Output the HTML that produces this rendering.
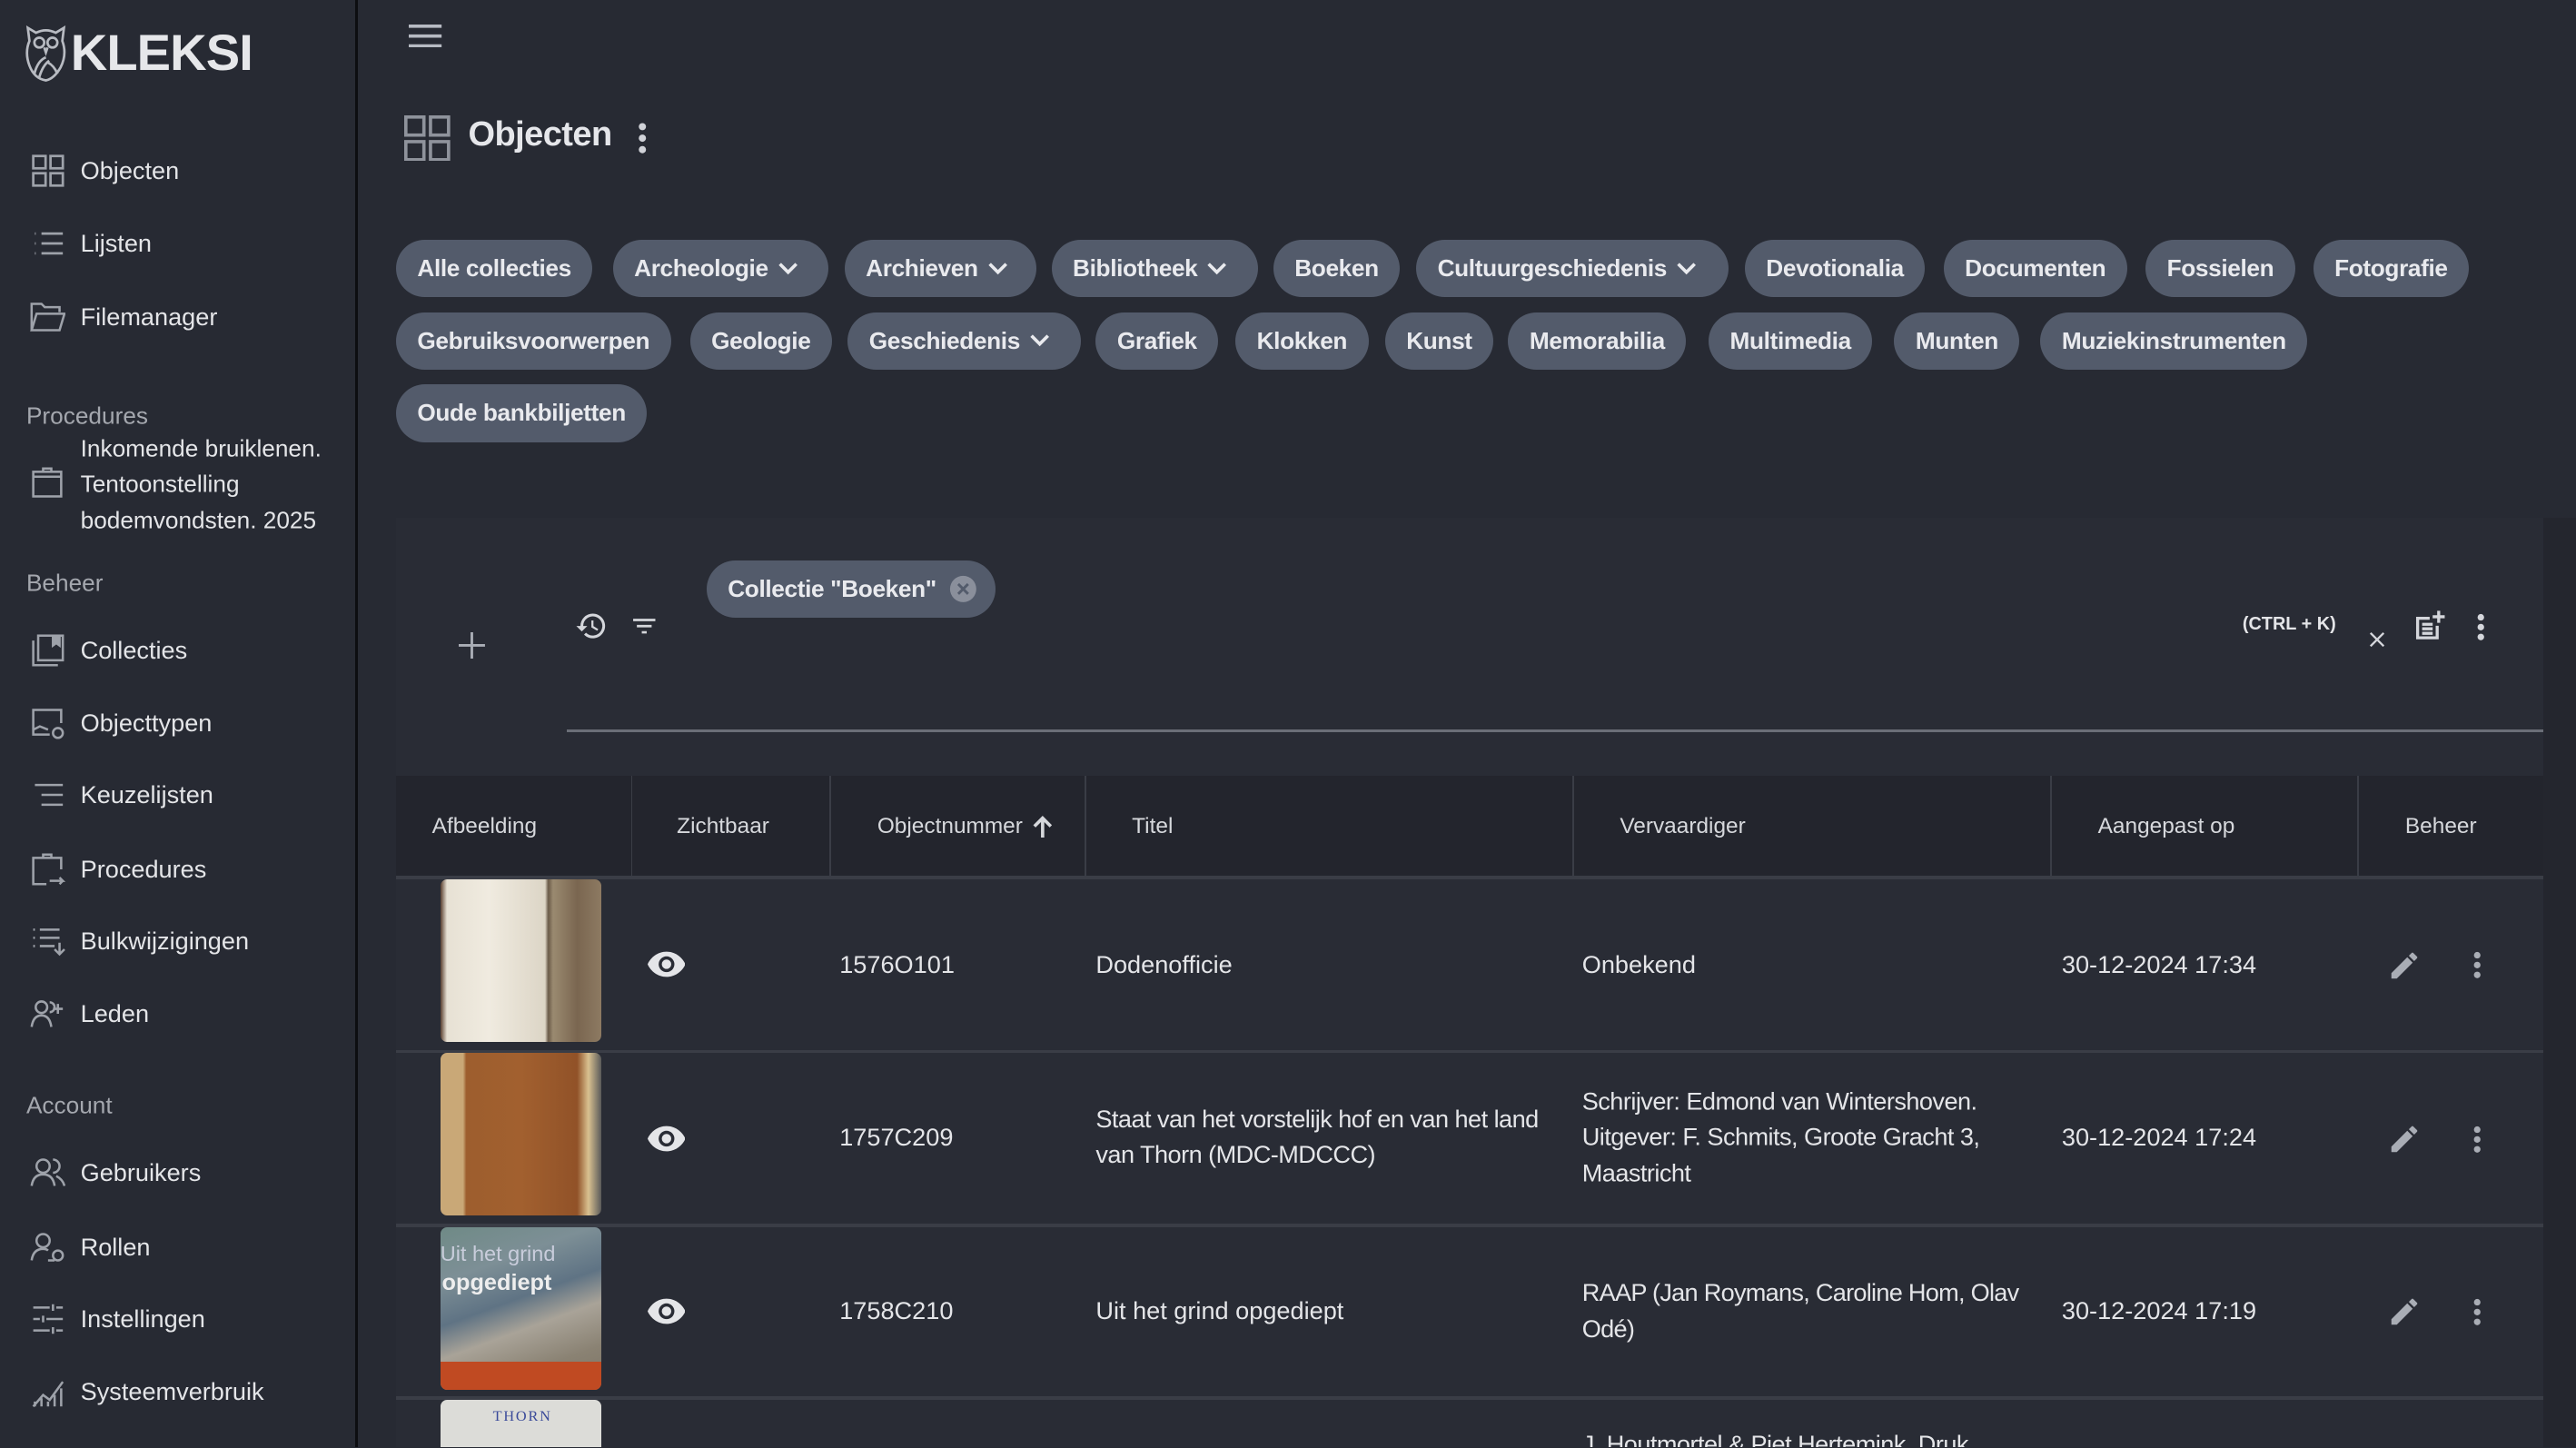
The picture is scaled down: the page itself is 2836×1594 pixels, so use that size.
<!DOCTYPE html>
<html><head><meta charset="utf-8"><style>
*{box-sizing:border-box;margin:0;padding:0}
html,body{width:2836px;height:1594px;overflow:hidden;background:#272a33}
#r{zoom:1.80867;width:1568px;height:881px;position:relative;overflow:hidden;font-family:"Liberation Sans",sans-serif;color:#e2e3e7;background:#272a33}
.a{position:absolute}
#sb{left:0;top:0;width:218px;height:881px;background:#272a33;border-right:2px solid #0d0e11}
.ni{position:absolute;left:49px;font-size:15px;color:#e4e5e8;transform:translateY(-50%);white-space:nowrap}
.ic{position:absolute;left:18px;width:22px;height:22px;transform:translateY(-50%)}
.sec{position:absolute;left:16px;font-size:14.5px;color:#a4a7ae;transform:translateY(-50%)}
.chip{position:absolute;height:35px;border-radius:18px;background:#535b6b;color:#e9eaee;font-weight:bold;font-size:14.5px;line-height:35px;padding:0 13px;white-space:nowrap;letter-spacing:-.2px;display:flex;align-items:center}
.chip svg{display:inline-block;margin-left:5px}
.th{position:absolute;top:472px;height:62px;line-height:62px;font-size:13.5px;color:#d6d8dc}
.vl{position:absolute;top:472px;height:62px;width:1px;background:#3a3d46}
.hl{position:absolute;left:241px;width:1307px;height:2px;background:#3a3d46}
.td{position:absolute;font-size:15px;color:#e4e5e8;line-height:22px;transform:translateY(-50%)}
.th2{position:absolute;left:268px;width:98px;height:99px;border-radius:4px;overflow:hidden}
svg{display:block}
</style></head><body><div id="r">
<div id="sb" class="a">
 <div class="a" style="left:15px;top:15px">
  <svg width="26" height="35" viewBox="0 0 26 35" fill="none" stroke="#b8bbc2" stroke-width="1.5"><path d="M2 2 L7 5 Q13 2 19 5 L24 2 L23 10 Q26 18 22 26 Q18 33 13 34 Q6 33 3 25 Q0 17 3 10 Z"/><circle cx="9" cy="11" r="3"/><circle cx="17" cy="11" r="3"/><path d="M12 14 L13 17 L14 14"/><path d="M6 30 Q8 22 13 20 M9 32 Q11 25 15 22 M20 30 Q18 25 14 23"/></svg>
 </div>
 <div class="a" style="left:43px;top:14px;font-size:31px;font-weight:bold;color:#e6e7ea;letter-spacing:-0.5px">KLEKSI</div>

 <svg class="ic" style="top:104px" viewBox="0 0 22 22" fill="none" stroke="#9ea2aa" stroke-width="1.5"><rect x="2" y="2" width="7.5" height="7.5"/><rect x="12.5" y="2" width="7.5" height="7.5"/><rect x="2" y="12.5" width="7.5" height="7.5"/><rect x="12.5" y="12.5" width="7.5" height="7.5"/></svg>
 <div class="ni" style="top:104px">Objecten</div>
 <svg class="ic" style="top:148px" viewBox="0 0 22 22" fill="none" stroke="#9ea2aa" stroke-width="1.5"><path d="M3 5h0.5M3 11h0.5M3 17h0.5M7 5h13M7 11h13M7 17h13"/></svg>
 <div class="ni" style="top:148px">Lijsten</div>
 <svg class="ic" style="top:193px" viewBox="0 0 22 22" fill="none" stroke="#9ea2aa" stroke-width="1.4"><path d="M1 19V3h6l2 2h9v3M1 19l3-10h17l-3 10z"/></svg>
 <div class="ni" style="top:193px">Filemanager</div>

 <div class="sec" style="top:253px">Procedures</div>
 <svg class="ic" style="top:294px" viewBox="0 0 22 22" fill="none" stroke="#9ea2aa" stroke-width="1.4"><rect x="2" y="4" width="17" height="15"/><path d="M2 7h17M8 4V2h5v2"/></svg>
 <div class="ni" style="top:295px;line-height:22px;font-size:14.5px">Inkomende bruiklenen.<br>Tentoonstelling<br>bodemvondsten. 2025</div>

 <div class="sec" style="top:355px">Beheer</div>
 <svg class="ic" style="top:396px" viewBox="0 0 22 22" fill="none" stroke="#9ea2aa" stroke-width="1.4"><rect x="5" y="2" width="15" height="15"/><path d="M2 5v15h15"/><path d="M14 2v6l2-1.5 2 1.5V2" fill="#9ea2aa"/></svg>
 <div class="ni" style="top:396px">Collecties</div>
 <svg class="ic" style="top:440px" viewBox="0 0 22 22" fill="none" stroke="#9ea2aa" stroke-width="1.4"><path d="M12 18H2V3h17v8M2 15l4-2 5 2"/><circle cx="17" cy="17" r="3"/></svg>
 <div class="ni" style="top:440px">Objecttypen</div>
 <svg class="ic" style="top:484px" viewBox="0 0 22 22" fill="none" stroke="#9ea2aa" stroke-width="1.4"><path d="M3 5h17M7 11h13M7 17h13"/></svg>
 <div class="ni" style="top:484px">Keuzelijsten</div>
 <svg class="ic" style="top:529px" viewBox="0 0 22 22" fill="none" stroke="#9ea2aa" stroke-width="1.4"><path d="M19 11V4H2v16h8M8 4V2h5v2M12 18h8l-2-2M20 18l-2 2"/></svg>
 <div class="ni" style="top:529px">Procedures</div>
 <svg class="ic" style="top:573px" viewBox="0 0 22 22" fill="none" stroke="#9ea2aa" stroke-width="1.4"><path d="M2 4h1M6 4h12M2 9h1M6 9h12M2 14h1M6 14h9M15 16l3 3 3-3M18 12v7"/></svg>
 <div class="ni" style="top:573px">Bulkwijzigingen</div>
 <svg class="ic" style="top:617px" viewBox="0 0 22 22" fill="none" stroke="#9ea2aa" stroke-width="1.4"><circle cx="7" cy="7" r="3.5"/><path d="M1 19q1-7 6-7t6 7M12 4a3 3 0 0 1 0 6M17 5v6M14 8h6"/></svg>
 <div class="ni" style="top:617px">Leden</div>

 <div class="sec" style="top:673px">Account</div>
 <svg class="ic" style="top:714px" viewBox="0 0 22 22" fill="none" stroke="#9ea2aa" stroke-width="1.4"><circle cx="8" cy="7" r="4"/><path d="M1 19q1-7 7-7t7 7M14 3a4 4 0 0 1 0 8M16 13q4 2 5 6"/></svg>
 <div class="ni" style="top:714px">Gebruikers</div>
 <svg class="ic" style="top:759px" viewBox="0 0 22 22" fill="none" stroke="#9ea2aa" stroke-width="1.4"><circle cx="8" cy="7" r="4"/><path d="M1 19q1-7 7-7 2 0 3 1M11 19h4"/><circle cx="17" cy="16" r="3"/></svg>
 <div class="ni" style="top:759px">Rollen</div>
 <svg class="ic" style="top:803px" viewBox="0 0 22 22" fill="none" stroke="#9ea2aa" stroke-width="1.4"><path d="M2 4h10M16 4h4M14 2v4M2 11h4M10 11h10M8 9v4M2 18h10M16 18h4M14 16v4"/></svg>
 <div class="ni" style="top:803px">Instellingen</div>
 <svg class="ic" style="top:847px" viewBox="0 0 22 22" fill="none" stroke="#9ea2aa" stroke-width="1.4"><path d="M2 20l6-7 4 3 8-11M3 20v-3M7 20v-5M11 20v-3M15 20v-7M19 20v-11"/></svg>
 <div class="ni" style="top:847px">Systeemverbruik</div>
</div>

<!-- top -->
<svg class="a" style="left:249px;top:15px" width="20" height="14" viewBox="0 0 20 14" stroke="#b7bbc3" stroke-width="2"><path d="M0 1h20M0 7h20M0 13h20"/></svg>
<svg class="a" style="left:246px;top:70px" width="28" height="28" viewBox="0 0 28 28" fill="none" stroke="#8f939c" stroke-width="2"><rect x="1" y="1" width="11" height="11"/><rect x="16" y="1" width="11" height="11"/><rect x="1" y="16" width="11" height="11"/><rect x="16" y="16" width="11" height="11"/></svg>
<div class="a" style="left:285px;top:70px;font-size:21px;font-weight:bold;color:#e5e6ea;letter-spacing:-0.3px">Objecten</div>
<svg class="a" style="left:387px;top:74px" width="8" height="20" viewBox="0 0 8 20" fill="#d0d2d8"><circle cx="4" cy="3" r="2.2"/><circle cx="4" cy="10" r="2.2"/><circle cx="4" cy="17" r="2.2"/></svg>

<!-- chips -->
<div class="chip" style="left:241px;top:146px">Alle collecties</div>
<div class="chip" style="left:373px;top:146px;width:131px">Archeologie<svg width="14" height="10" viewBox="0 0 14 10" fill="none" stroke="#e9eaee" stroke-width="2"><path d="M2 2l5 5 5-5"/></svg></div>
<div class="chip" style="left:514px;top:146px;width:117px">Archieven<svg width="14" height="10" viewBox="0 0 14 10" fill="none" stroke="#e9eaee" stroke-width="2"><path d="M2 2l5 5 5-5"/></svg></div>
<div class="chip" style="left:640px;top:146px;width:126px">Bibliotheek<svg width="14" height="10" viewBox="0 0 14 10" fill="none" stroke="#e9eaee" stroke-width="2"><path d="M2 2l5 5 5-5"/></svg></div>
<div class="chip" style="left:775px;top:146px">Boeken</div>
<div class="chip" style="left:862px;top:146px;width:190px">Cultuurgeschiedenis<svg width="14" height="10" viewBox="0 0 14 10" fill="none" stroke="#e9eaee" stroke-width="2"><path d="M2 2l5 5 5-5"/></svg></div>
<div class="chip" style="left:1062px;top:146px">Devotionalia</div>
<div class="chip" style="left:1183px;top:146px">Documenten</div>
<div class="chip" style="left:1306px;top:146px">Fossielen</div>
<div class="chip" style="left:1408px;top:146px">Fotografie</div>
<div class="chip" style="left:241px;top:190px">Gebruiksvoorwerpen</div>
<div class="chip" style="left:420px;top:190px">Geologie</div>
<div class="chip" style="left:516px;top:190px;width:142px">Geschiedenis<svg width="14" height="10" viewBox="0 0 14 10" fill="none" stroke="#e9eaee" stroke-width="2"><path d="M2 2l5 5 5-5"/></svg></div>
<div class="chip" style="left:667px;top:190px">Grafiek</div>
<div class="chip" style="left:752px;top:190px">Klokken</div>
<div class="chip" style="left:843px;top:190px">Kunst</div>
<div class="chip" style="left:918px;top:190px">Memorabilia</div>
<div class="chip" style="left:1040px;top:190px">Multimedia</div>
<div class="chip" style="left:1153px;top:190px">Munten</div>
<div class="chip" style="left:1242px;top:190px">Muziekinstrumenten</div>
<div class="chip" style="left:241px;top:234px">Oude bankbiljetten</div>

<!-- card -->
<div class="a" style="left:1548px;top:315px;width:20px;height:566px;background:#24262e"></div>
<div class="a" style="left:241px;top:315px;width:1307px;height:566px;background:#292c35"></div>
<svg class="a" style="left:279px;top:385px" width="16" height="16" viewBox="0 0 16 16" stroke="#a9adb5" stroke-width="1.6"><path d="M8 0v16M0 8h16"/></svg>
<svg class="a" style="left:350px;top:371px" width="20" height="20" viewBox="0 0 24 24" fill="#d4d6db"><path d="M13 3a9 9 0 0 0-9 9H1l3.9 3.9.1.1L9 12H6a7 7 0 1 1 2.05 4.95l-1.420 1.42A9 9 0 1 0 13 3zm-1 5v5l4.25 2.52.77-1.28-3.52-2.09V8z"/></svg>
<svg class="a" style="left:383px;top:372px" width="18" height="18" viewBox="0 0 24 24" fill="#d4d6db"><path d="M10 18h4v-2h-4zM3 6v2h18V6zm3 7h12v-2H6z"/></svg>
<div class="chip" style="left:430px;top:341px;width:176px;padding-right:10px">Collectie "Boeken"<svg style="margin-left:8px" width="17" height="17" viewBox="0 0 17 17"><circle cx="8.5" cy="8.5" r="8" fill="#8a8f9b"/><path d="M5.5 5.5l6 6M11.5 5.5l-6 6" stroke="#535b6b" stroke-width="1.6"/></svg></div>
<div class="a" style="left:1365px;top:374px;font-size:11px;font-weight:bold;color:#e4e5e8">(CTRL + K)</div>
<svg class="a" style="left:1442px;top:384px" width="10" height="10" viewBox="0 0 10 10" stroke="#d4d6db" stroke-width="1.3"><path d="M1 1l8 8M9 1l-8 8"/></svg>
<svg class="a" style="left:1468px;top:370px" width="22" height="22" viewBox="0 0 24 24" fill="#d4d6db"><path d="M17 2v3h-3v2h3v3h2V7h3V5h-3V2zM3 6v15h15v-9h-2v7H5V8h7V6zm4 4v2h7v-2zm0 3v2h7v-2zm0 3v2h7v-2z"/></svg>
<svg class="a" style="left:1506px;top:373px" width="8" height="17" viewBox="0 0 8 17" fill="#d4d6db"><circle cx="4" cy="2.5" r="2"/><circle cx="4" cy="8.5" r="2"/><circle cx="4" cy="14.5" r="2"/></svg>
<div class="a" style="left:345px;top:444px;width:1203px;height:1.5px;background:#6a6e77"></div>

<!-- table head -->
<div class="a" style="left:241px;top:472px;width:1307px;height:62px;background:#23252d"></div>
<div class="vl" style="left:384px"></div><div class="vl" style="left:505px"></div><div class="vl" style="left:660px"></div><div class="vl" style="left:957px"></div><div class="vl" style="left:1248px"></div><div class="vl" style="left:1435px"></div>
<div class="th" style="left:263px">Afbeelding</div>
<div class="th" style="left:412px">Zichtbaar</div>
<div class="th" style="left:534px;display:flex;align-items:center">Objectnummer <svg style="margin-left:6px" width="12" height="14" viewBox="0 0 12 14" fill="none" stroke="#d6d8dc" stroke-width="2"><path d="M6 14V2M1 7l5-5 5 5"/></svg></div>
<div class="th" style="left:689px">Titel</div>
<div class="th" style="left:986px">Vervaardiger</div>
<div class="th" style="left:1277px">Aangepast op</div>
<div class="th" style="left:1464px">Beheer</div>
<div class="hl" style="top:533px"></div>
<div class="hl" style="top:639px"></div>
<div class="hl" style="top:745px"></div>
<div class="hl" style="top:850px"></div>

<!-- thumbs -->
<div class="th2" style="top:535px;background:linear-gradient(90deg,#5a4030 0%,#e7e1d4 4%,#f0ebe0 30%,#dcd5c6 65%,#6a5a48 67%,#9a8a70 70%,#7a6650 85%,#8d7a62 100%)"></div>
<div class="th2" style="top:641px;background:linear-gradient(90deg,#c9a877 0%,#c9a877 14%,#9d5e2e 16%,#a2602f 50%,#915228 85%,#d9c190 92%,#5a5a5a 100%)"></div>
<div class="th2" style="top:747px;background:linear-gradient(160deg,#6f8a86 0%,#7d8f96 25%,#5f7384 45%,#a9a398 60%,#8a8273 80%,#7d7465 100%)">
 <div class="a" style="left:0;top:9px;font-size:13px;color:#dde;opacity:.8">Uit het grind</div>
 <div class="a" style="left:1px;top:26px;font-size:14px;font-weight:bold;color:#eee">opgediept</div>
 <div class="a" style="left:0;top:82px;width:98px;height:17px;background:#c04a22"></div>
</div>
<div class="th2" style="top:852px;height:40px;background:#dcdcd8"><div class="a" style="left:32px;top:5px;font-size:9px;font-family:'Liberation Serif',serif;color:#3a4a9a;letter-spacing:1px">THORN</div></div>

<!-- rows -->
<svg class="a" style="left:394px;top:579px" width="23" height="16" viewBox="0 0 24 16" fill="#e4e5e8"><path d="M12 0C6.5 0 2 3.5 0 8c2 4.5 6.5 8 12 8s10-3.5 12-8c-2-4.5-6.5-8-12-8zm0 13a5 5 0 1 1 0-10 5 5 0 0 1 0 10zm0-8a3 3 0 1 0 0 6 3 3 0 0 0 0-6z"/></svg>
<svg class="a" style="left:394px;top:685px" width="23" height="16" viewBox="0 0 24 16" fill="#e4e5e8"><path d="M12 0C6.5 0 2 3.5 0 8c2 4.5 6.5 8 12 8s10-3.5 12-8c-2-4.5-6.5-8-12-8zm0 13a5 5 0 1 1 0-10 5 5 0 0 1 0 10zm0-8a3 3 0 1 0 0 6 3 3 0 0 0 0-6z"/></svg>
<svg class="a" style="left:394px;top:790px" width="23" height="16" viewBox="0 0 24 16" fill="#e4e5e8"><path d="M12 0C6.5 0 2 3.5 0 8c2 4.5 6.5 8 12 8s10-3.5 12-8c-2-4.5-6.5-8-12-8zm0 13a5 5 0 1 1 0-10 5 5 0 0 1 0 10zm0-8a3 3 0 1 0 0 6 3 3 0 0 0 0-6z"/></svg>

<div class="td" style="left:511px;top:587px">1576O101</div>
<div class="td" style="left:667px;top:587px">Dodenofficie</div>
<div class="td" style="left:963px;top:587px">Onbekend</div>
<div class="td" style="left:1255px;top:587px">30-12-2024 17:34</div>

<div class="td" style="left:511px;top:692px">1757C209</div>
<div class="td" style="left:667px;top:692px;width:290px;letter-spacing:-0.3px">Staat van het vorstelijk hof en van het land van Thorn (MDC-MDCCC)</div>
<div class="td" style="left:963px;top:692px;width:285px;letter-spacing:-0.3px">Schrijver: Edmond van Wintershoven. Uitgever: F. Schmits, Groote Gracht 3, Maastricht</div>
<div class="td" style="left:1255px;top:692px">30-12-2024 17:24</div>

<div class="td" style="left:511px;top:798px">1758C210</div>
<div class="td" style="left:667px;top:798px">Uit het grind opgediept</div>
<div class="td" style="left:963px;top:798px;width:285px;letter-spacing:-0.4px">RAAP (Jan Roymans, Caroline Hom, Olav<br>Odé)</div>
<div class="td" style="left:1255px;top:798px">30-12-2024 17:19</div>

<div class="a" style="left:963px;top:870px;font-size:15px;color:#e4e5e8;letter-spacing:-0.3px">J. Houtmortel &amp; Piet Hertemink. Druk</div>

<svg class="a" style="left:1453px;top:577px" width="21" height="21" viewBox="0 0 24 24" fill="#a9adb5"><path d="M3 17.25V21h3.75L17.81 9.94l-3.75-3.75zM20.71 7.04a1 1 0 0 0 0-1.410l-2.34-2.34a1 1 0 0 0-1.41 0l-1.83 1.83 3.75 3.75z"/></svg>
<svg class="a" style="left:1453px;top:683px" width="21" height="21" viewBox="0 0 24 24" fill="#a9adb5"><path d="M3 17.25V21h3.75L17.81 9.94l-3.75-3.75zM20.71 7.04a1 1 0 0 0 0-1.41l-2.34-2.34a1 1 0 0 0-1.41 0l-1.83 1.83 3.75 3.75z"/></svg>
<svg class="a" style="left:1453px;top:788px" width="21" height="21" viewBox="0 0 24 24" fill="#a9adb5"><path d="M3 17.25V21h3.75L17.81 9.94l-3.75-3.75zM20.71 7.04a1 1 0 0 0 0-1.41l-2.34-2.34a1 1 0 0 0-1.41 0l-1.83 1.83 3.75 3.75z"/></svg>
<svg class="a" style="left:1504px;top:579px" width="8" height="17" viewBox="0 0 8 17" fill="#a9adb5"><circle cx="4" cy="2.5" r="2"/><circle cx="4" cy="8.5" r="2"/><circle cx="4" cy="14.5" r="2"/></svg>
<svg class="a" style="left:1504px;top:685px" width="8" height="17" viewBox="0 0 8 17" fill="#a9adb5"><circle cx="4" cy="2.5" r="2"/><circle cx="4" cy="8.5" r="2"/><circle cx="4" cy="14.5" r="2"/></svg>
<svg class="a" style="left:1504px;top:790px" width="8" height="17" viewBox="0 0 8 17" fill="#a9adb5"><circle cx="4" cy="2.5" r="2"/><circle cx="4" cy="8.5" r="2"/><circle cx="4" cy="14.5" r="2"/></svg>
</div></body></html>
